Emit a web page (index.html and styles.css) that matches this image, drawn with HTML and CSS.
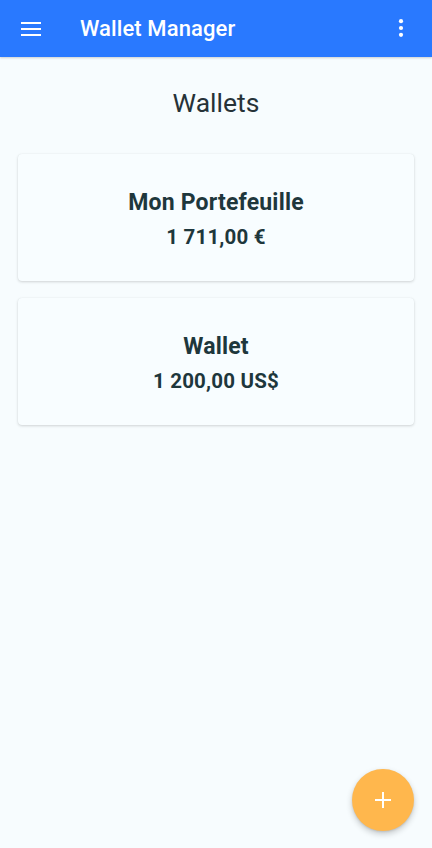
FILE: index.html
```html
<!DOCTYPE html>
<html lang="fr">
<head>
<meta charset="utf-8">
<title>Wallet Manager</title>
<link rel="stylesheet" href="styles.css">
</head>
<body>
<header class="appbar">
  <button class="icon-btn menu" aria-label="Menu">
    <svg width="20" height="14" viewBox="0 0 20 14"><rect x="0" y="0" width="20" height="2" fill="#fff"/><rect x="0" y="6" width="20" height="2" fill="#fff"/><rect x="0" y="12" width="20" height="2" fill="#fff"/></svg>
  </button>
  <h1 class="appbar-title">Wallet Manager</h1>
  <button class="icon-btn more" aria-label="Plus">
    <svg width="6" height="18" viewBox="0 0 6 18"><circle cx="3" cy="2.2" r="2.1" fill="#fff"/><circle cx="3" cy="9" r="2.1" fill="#fff"/><circle cx="3" cy="15.8" r="2.1" fill="#fff"/></svg>
  </button>
</header>
<main class="content">
  <h2 class="page-title">Wallets</h2>
  <section class="wallets">
    <article class="card">
      <div class="card-name">Mon Portefeuille</div>
      <div class="card-amount">1 711,00 €</div>
    </article>
    <article class="card">
      <div class="card-name">Wallet</div>
      <div class="card-amount">1 200,00 US$</div>
    </article>
  </section>
</main>
<button class="fab" aria-label="Ajouter">
  <svg width="18" height="18" viewBox="0 0 18 18"><rect x="8" y="1" width="2" height="16" fill="#fff"/><rect x="1" y="8" width="16" height="2" fill="#fff"/></svg>
</button>
</body>
</html>
```
FILE: styles.css
```css
html, body {
  margin: 0;
  padding: 0;
}
body {
  background: #f7fcfe;
  font-family: Roboto, "Noto Sans", sans-serif;
  width: 432px;
  height: 848px;
  position: relative;
  overflow: hidden;
}
.appbar {
  height: 57px;
  background: #2979ff;
  display: flex;
  align-items: center;
  box-shadow: 0 1px 2px rgba(0,0,0,0.18);
  position: relative;
  z-index: 1;
}
.icon-btn {
  background: none;
  border: 0;
  padding: 0;
  display: flex;
  align-items: center;
  justify-content: center;
  cursor: pointer;
}
.menu {
  margin-left: 21px;
  width: 20px;
  height: 20px;
}
.appbar-title {
  margin: 0 0 0 39px;
  flex: 1;
  color: #fff;
  font-size: 22px;
  font-weight: 500;
  line-height: 28px;
  letter-spacing: 0.1px;
}
.more {
  width: 6px;
  height: 20px;
  margin-right: 28px;
  margin-top: -1px;
}
.content {
  padding: 30px 18px 0;
}
.page-title {
  margin: 0;
  text-align: center;
  font-size: 26.5px;
  font-weight: 400;
  line-height: 32px;
  color: #263238;
}
.wallets {
  margin-top: 35px;
  display: flex;
  flex-direction: column;
  gap: 17px;
}
.card {
  height: 127px;
  box-sizing: border-box;
  background: #f8fdff;
  border-radius: 4px;
  box-shadow: 0 1px 3px rgba(0,0,0,0.16), 0 0 1px rgba(0,0,0,0.08);
  display: flex;
  flex-direction: column;
  align-items: center;
  padding-top: 35px;
  gap: 8px;
  color: #1e373c;
}
.card-name {
  font-size: 23px;
  font-weight: 700;
  line-height: 28px;
  letter-spacing: 0.2px;
}
.card-amount {
  font-size: 20.5px;
  font-weight: 700;
  line-height: 24px;
  letter-spacing: 0.2px;
}
.fab {
  position: absolute;
  right: 18px;
  bottom: 17px;
  width: 62px;
  height: 62px;
  border-radius: 50%;
  border: 0;
  padding: 0;
  background: #ffb74d;
  box-shadow: 0 3px 6px rgba(0,0,0,0.2), 0 1px 2px rgba(0,0,0,0.1);
  display: flex;
  align-items: center;
  justify-content: center;
}
```
